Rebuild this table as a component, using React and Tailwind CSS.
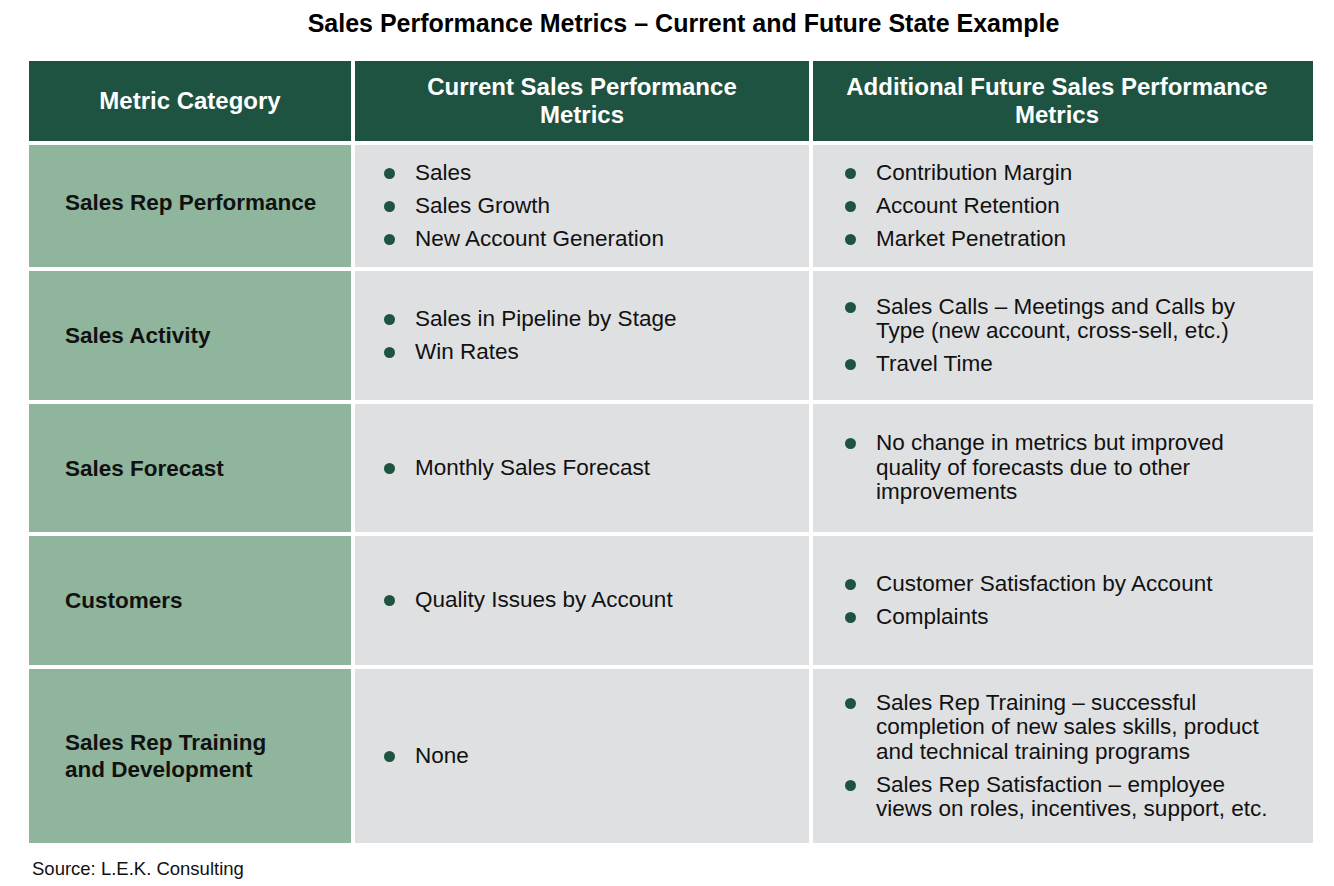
import React from "react";

/* Sales performance metrics table */

const ROWS = [
  {
    category: ["Sales Rep Performance"],
    height: "h-[122px]",
    catPad: "pb-[8px]",
    current: [["Sales"], ["Sales Growth"], ["New Account Generation"]],
    future: [["Contribution Margin"], ["Account Retention"], ["Market Penetration"]],
  },
  {
    category: ["Sales Activity"],
    height: "h-[129px]",
    catPad: "",
    current: [["Sales in Pipeline by Stage"], ["Win Rates"]],
    future: [
      ["Sales Calls – Meetings and Calls by", "Type (new account, cross-sell, etc.)"],
      ["Travel Time"],
    ],
  },
  {
    category: ["Sales Forecast"],
    height: "h-[128px]",
    catPad: "",
    current: [["Monthly Sales Forecast"]],
    future: [
      ["No change in metrics but improved", "quality of forecasts due to other", "improvements"],
    ],
  },
  {
    category: ["Customers"],
    height: "h-[129px]",
    catPad: "",
    current: [["Quality Issues by Account"]],
    future: [["Customer Satisfaction by Account"], ["Complaints"]],
  },
  {
    category: ["Sales Rep Training", "and Development"],
    height: "h-[174px]",
    catPad: "",
    current: [["None"]],
    future: [
      [
        "Sales Rep Training – successful",
        "completion of new sales skills, product",
        "and technical training programs",
      ],
      ["Sales Rep Satisfaction – employee", "views on roles, incentives, support, etc."],
    ],
  },
];

function BulletList({ items, padClass }) {
  return (
    <div className={`flex flex-col justify-center gap-[8.5px] h-full ${padClass}`}>
      {items.map((lines, i) => (
        <div className="flex items-start gap-[20px]" key={i}>
          <span className="mt-[7px] w-[11px] h-[11px] rounded-full bg-[#1e5341] shrink-0" />
          <p className="text-[22.5px] leading-[24.5px] text-[#111111]">
            {lines.map((line, j) => (
              <span className="block whitespace-nowrap" key={j}>
                {line}
              </span>
            ))}
          </p>
        </div>
      ))}
    </div>
  );
}

export default function App() {
  return (
    <div
      className="w-[1334px] h-[886px] bg-white overflow-hidden"
      style={{ fontFamily: '"Liberation Sans", Arial, sans-serif' }}
    >
      {/* Title */}
      <h1 className="pt-[8px] pl-[33px] text-center text-[25px] leading-[30px] font-bold text-black">
        Sales Performance Metrics – Current and Future State Example
      </h1>

      {/* Table */}
      <div className="ml-[29px] mt-[23px] w-[1284px] grid grid-cols-[322px_454px_500px] gap-[4px]">
        <div className="h-[80px] bg-[#1e5341] flex items-center justify-center text-white font-bold text-[24px] leading-[28px]">
          Metric Category
        </div>
        <div className="h-[80px] bg-[#1e5341] flex items-center justify-center text-center text-white font-bold text-[24px] leading-[28px]">
          <span>
            Current Sales Performance
            <br />
            Metrics
          </span>
        </div>
        <div className="h-[80px] bg-[#1e5341] flex items-center justify-center pr-[12px] text-center text-white font-bold text-[24px] leading-[28px]">
          <span>
            Additional Future Sales Performance
            <br />
            Metrics
          </span>
        </div>

        {ROWS.map((row, i) => (
          <React.Fragment key={i}>
            <div className={`${row.height} ${row.catPad} bg-[#8fb59c] flex items-center pl-[36px]`}>
              <p className="text-[22.5px] leading-[27px] font-bold text-[#111111]">
                {row.category.map((c, j) => (
                  <span className="block" key={j}>
                    {c}
                  </span>
                ))}
              </p>
            </div>
            <div className={`${row.height} bg-[#dfe0e2]`}>
              <BulletList items={row.current} padClass="pl-[29px]" />
            </div>
            <div className={`${row.height} bg-[#dfe0e2]`}>
              <BulletList items={row.future} padClass="pl-[32px]" />
            </div>
          </React.Fragment>
        ))}
      </div>

      {/* Footer */}
      <p className="ml-[32px] mt-[15px] text-[18.5px] leading-[22px] text-[#111111]">
        Source: L.E.K. Consulting
      </p>
    </div>
  );
}
